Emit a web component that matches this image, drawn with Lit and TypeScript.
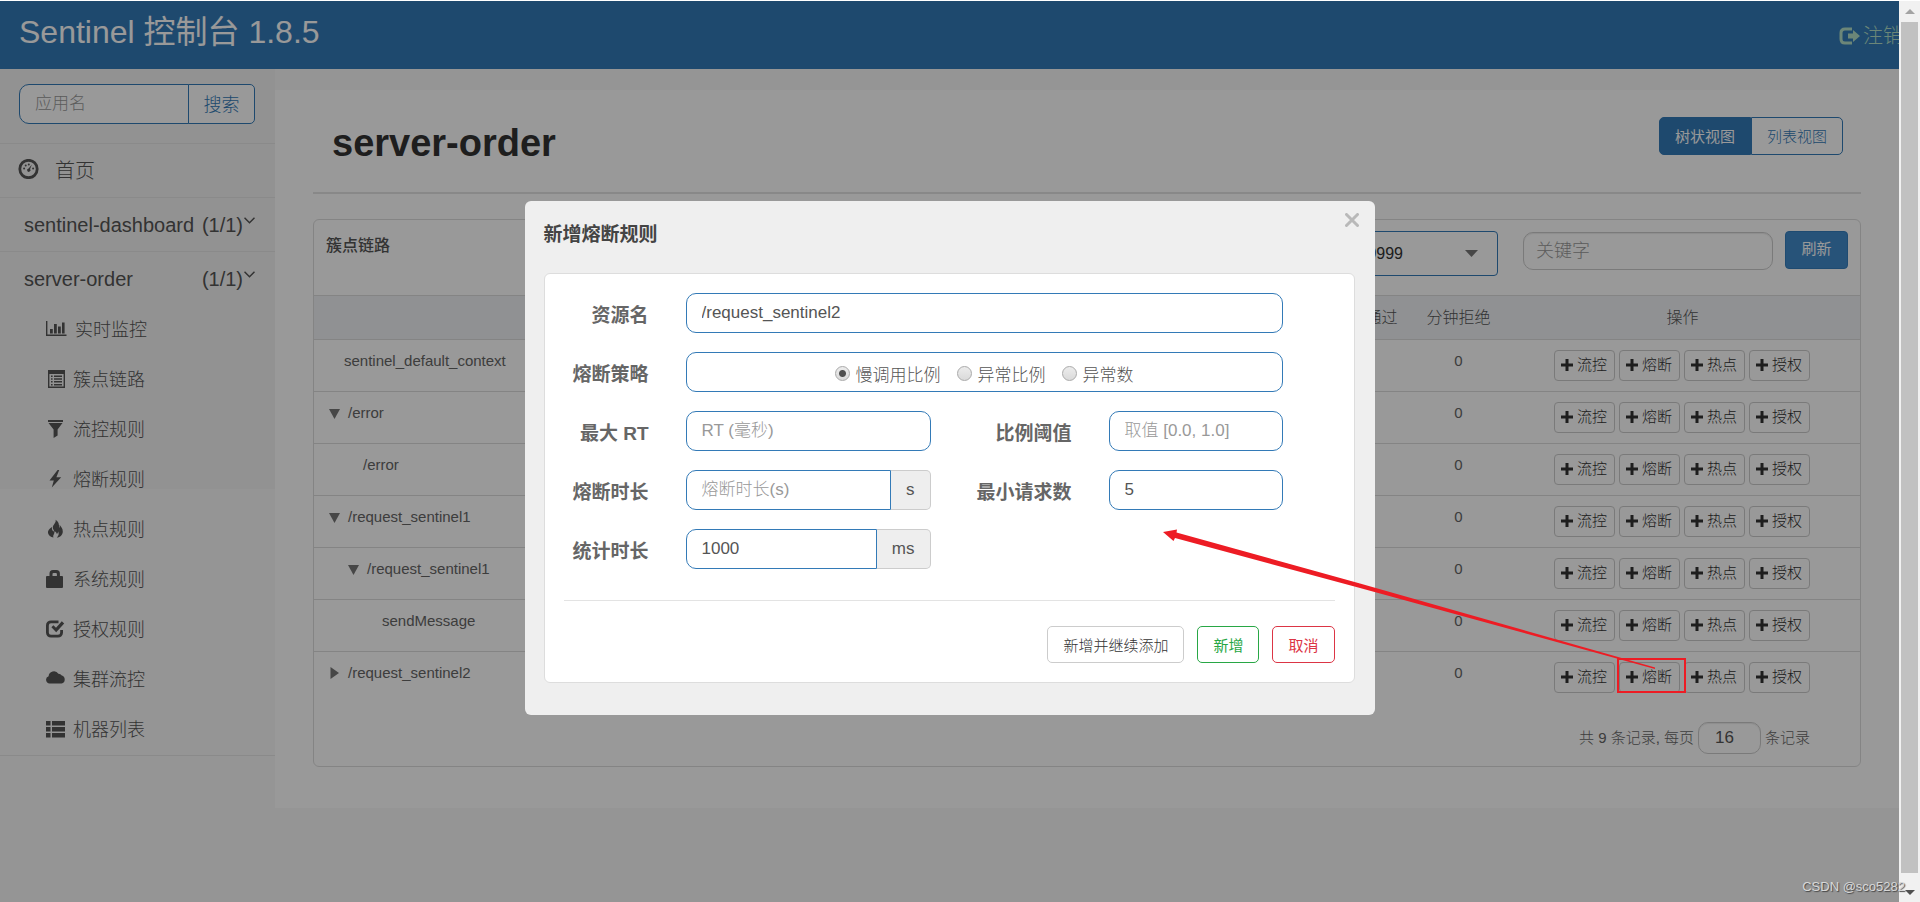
import { LitElement, html, css, svg } from "lit";
import { customElement } from "lit/decorators.js";
import { classMap } from "lit/directives/class-map.js";
import { styleMap } from "lit/directives/style-map.js";

interface MenuItem {
  icon: string;
  text: string;
}

interface TreeNode {
  name: string;
  level: number;
  toggle: "open" | "closed" | "leaf";
}

const MENU: MenuItem[] = [
  { icon: "chart", text: "实时监控" },
  { icon: "listAlt", text: "簇点链路" },
  { icon: "filter", text: "流控规则" },
  { icon: "flash", text: "熔断规则" },
  { icon: "fire", text: "热点规则" },
  { icon: "lock", text: "系统规则" },
  { icon: "check", text: "授权规则" },
  { icon: "cloud", text: "集群流控" },
  { icon: "thList", text: "机器列表" },
];

const NODES: TreeNode[] = [
  { name: "sentinel_default_context", level: 0, toggle: "leaf" },
  { name: "/error", level: 0, toggle: "open" },
  { name: "/error", level: 1, toggle: "leaf" },
  { name: "/request_sentinel1", level: 0, toggle: "open" },
  { name: "/request_sentinel1", level: 1, toggle: "open" },
  { name: "sendMessage", level: 2, toggle: "leaf" },
  { name: "/request_sentinel2", level: 0, toggle: "closed" },
];

const ACTIONS = ["流控", "熔断", "热点", "授权"];
const STRATEGIES = ["慢调用比例", "异常比例", "异常数"];

const ICONS: Record<string, unknown> = {
  dashboard: svg`<circle cx="10.500" cy="10" r="8.700" fill="none" stroke="currentColor" stroke-width="2.800"/>
    <circle cx="6.100" cy="9.600" r="1"/><circle cx="7.700" cy="6.400" r="1"/><circle cx="10.800" cy="5.400" r="1"/><circle cx="15.100" cy="9.600" r="1"/>
    <path d="M13.900 5.600 12.100 10a1.700 1.700 0 1 1-1.500-.6Z"/>`,
  chart: svg`<path d="M0 2h1.400v13.400H20.500V17H0ZM4 10h2.800v4.400H4ZM8 5h2.800v9.400H8ZM12 7.400h2.800v7H12ZM16 3.600h2.600v10.800H16Z"/>`,
  listAlt: svg`<path fill-rule="evenodd" d="M2 1h17v18H2ZM3.400 5v12.600h14.200V5Z"/>
    <path d="M5 6.500h1.600V8H5ZM8 6.500h8V8H8ZM5 9.300h1.600v1.500H5ZM8 9.300h8v1.500H8ZM5 12.100h1.600v1.500H5ZM8 12.100h8v1.500H8ZM5 14.900h1.600v1.500H5ZM8 14.900h8v1.500H8Z"/>`,
  filter: svg`<path d="M2 1h15v2H2ZM2.500 4h14L11.600 10.600V16.500L7.600 19V10.600Z"/>`,
  flash: svg`<path d="M11.600 1 3.500 11.400H7.800L5.800 18.500 15.200 8.300H10.400L13.200 1Z"/>`,
  fire: svg`<path d="M9.600.8c.8 3.200-2.800 4.800-2.800 8 0 1.400 1.200 2 1.200 3.600-1.600-.2-2.400-2.200-2-4.400C3.400 9.600 1.600 11.600 2 14c.4 2.200 2.600 4 5.600 4.600-1.200-2.400 1.200-3.400.8-6.400 1.600.6 2.400 1.600 2.400 2.800 1-.6 1.400-1.600 1.200-2.800 1.400 2.200.6 4.800-1.200 6.400 3.400-.4 6-2.800 6-6.200 0-3-1.800-4.400-3.200-6.600.2 1.400 0 2.600-.6 3.200C13.400 5.400 12.400 2.400 9.600.8Z"/>`,
  lock: svg`<path fill-rule="evenodd" d="M3.500 7V4.500A3.500 3.500 0 0 1 7 1h3.400a3.500 3.500 0 0 1 3.500 3.500V7H16a1 1 0 0 1 1 1v10a1 1 0 0 1-1 1H1a1 1 0 0 1-1-1V8A1 1 0 0 1 1 7ZM6.500 7h4.400V5a1 1 0 0 0-1-1H7.500a1 1 0 0 0-1 1Z"/>`,
  check: svg`<path d="M12.500 2.800H5A3.600 3.600 0 0 0 1.400 6.400v7.200A3.600 3.600 0 0 0 5 17.200h7a3.600 3.600 0 0 0 3.600-3.600V11" fill="none" stroke="currentColor" stroke-width="2.800"/>
    <path d="m5.400 8.200 2-2 2.600 2.600L15.800 2.200 18.200 4.400 10.200 13.200Z"/>`,
  cloud: svg`<path d="M3.600 14.500A3.700 3.700 0 0 1 2.600 7.300 5.300 5.300 0 0 1 12.400 4.800a4 4 0 0 1 3.400 1.800A4.100 4.100 0 0 1 15.600 14.500Z"/>`,
  thList: svg`<path d="M0 2h4.500v4.600H0ZM6 2h13v4.600H6ZM0 8h4.500v4.600H0ZM6 8h13v4.600H6ZM0 14h4.500v4.600H0ZM6 14h13v4.600H6Z"/>`,
};

const icon = (name: string) =>
  html`<svg class="icon" viewBox="0 0 21 20" width="21" height="20" fill="currentColor" aria-hidden="true">${ICONS[name]}</svg>`;

const shared = css`
  * {
    box-sizing: border-box;
  }
  button,
  input,
  select {
    font: inherit;
    color: inherit;
    margin: 0;
  }
  button {
    display: inline-flex;
    align-items: center;
    justify-content: center;
    padding: 0 0 2px;
    background: none;
    border: 1px solid;
    border-radius: 4px;
    cursor: pointer;
  }
  .icon {
    display: block;
    flex: none;
  }
`;

@customElement("side-menu")
export class SideMenu extends LitElement {
  static styles = [
    shared,
    css`
      :host {
        display: block;
        width: 275px;
        flex: none;
        color: #555;
      }
      .nav {
        background: linear-gradient(#f4f4f4 420px, #f8f8f8 420px);
        border-bottom: 1px solid #e7e7e7;
      }
      .search {
        display: flex;
        padding: 15px 20px 19px 19px;
        font-size: 17px;
      }
      .search input {
        flex: 1;
        min-width: 0;
        height: 40px;
        padding: 0 15px;
        background: #fff;
        border: 1px solid #337ab7;
        border-radius: 10px 0 0 10px;
      }
      .search input::placeholder {
        color: #999;
        opacity: 1;
      }
      .search button {
        width: 67px;
        height: 40px;
        margin-left: -1px;
        font-size: 18px;
        color: #337ab7;
        background: #fff;
        border-color: #337ab7;
        border-radius: 0 5px 5px 0;
      }
      .row {
        display: flex;
        align-items: center;
        height: 54px;
        border-top: 1px solid #e7e7e7;
        color: inherit;
        text-decoration: none;
        font-size: 20px;
        line-height: 30px;
      }
      .home {
        gap: 16px;
        padding: 0 18px;
      }
      .home .icon {
        margin-bottom: 4px;
      }
      .app {
        gap: 1px;
        padding: 0 20px 0 24px;
      }
      .name {
        flex: 1;
      }
      .app svg {
        margin-bottom: 8px;
      }
      .sub {
        display: flex;
        align-items: center;
        gap: 6px;
        height: 50px;
        padding-left: 46px;
        color: inherit;
        text-decoration: none;
        font-size: 18px;
        line-height: 26px;
      }
      .sub .icon {
        margin-bottom: 3px;
      }
      .wide {
        gap: 8px;
      }
    `,
  ];

  private app(name: string) {
    return html`<a class="row app" href="#">
      <span class="name">${name}</span><span>(1/1)</span>
      <svg width="11" height="7" viewBox="0 0 11 7" fill="none" stroke="currentColor" stroke-width="1.500" aria-hidden="true">
        <path d="M.5.700 5.500 5.700 10.500.700" />
      </svg>
    </a>`;
  }

  render() {
    return html`<nav class="nav">
      <div class="search">
        <input type="text" placeholder="应用名" aria-label="应用名" />
        <button type="button">搜索</button>
      </div>
      <a class="row home" href="#">${icon("dashboard")}<span>首页</span></a>
      ${this.app("sentinel-dashboard")} ${this.app("server-order")}
      ${MENU.map(
        (m) => html`<a class=${classMap({ sub: true, wide: m.icon === "chart" })} href="#">${icon(m.icon)}<span>${m.text}</span></a>`
      )}
    </nav>`;
  }
}

@customElement("link-table")
export class LinkTable extends LitElement {
  static styles = [
    shared,
    css`
      :host {
        display: block;
        border: 1px solid #ddd;
        border-radius: 6px;
        font-size: 15px;
        line-height: 22px;
        color: #666;
      }
      .head {
        display: flex;
        align-items: flex-start;
        padding: 11px 12px 19px;
      }
      .title {
        flex: 1;
        font-size: 16px;
        font-weight: 500;
        line-height: 30px;
        color: #555;
      }
      .machine {
        position: relative;
        display: flex;
        margin-right: 25px;
      }
      .machine select {
        appearance: none;
        width: 230px;
        height: 45px;
        padding: 0 94px 0 12px;
        font-size: 16px;
        color: #333;
        text-align-last: right;
        background: #fff;
        border: 1px solid #337ab7;
        border-radius: 4px;
      }
      .machine svg {
        position: absolute;
        right: 20px;
        top: 19px;
        pointer-events: none;
      }
      .key {
        width: 250px;
        height: 38px;
        margin: 1px 12px 0 0;
        padding: 0 12px;
        font-size: 18px;
        background: #fff;
        border: 1px solid #ccc;
        border-radius: 10px;
        box-shadow: inset 0 1px 1px rgba(0, 0, 0, 0.08);
      }
      .key::placeholder {
        color: #999;
        opacity: 1;
      }
      .refresh {
        width: 63px;
        height: 38px;
        font-weight: 400;
        color: #fff;
        background: #428bca;
        border-color: #357ebd;
      }
      table {
        width: 100%;
        table-layout: fixed;
        border-spacing: 0;
      }
      .num {
        width: 93px;
      }
      .ops {
        width: 355px;
      }
      th {
        height: 45px;
        padding: 0;
        font-size: 16px;
        font-weight: inherit;
        color: #555;
        background: #f0f2f5;
        border-top: 1px solid #ddd;
        border-bottom: 1px solid #ddd;
      }
      td {
        height: 52px;
        padding: 10px 0 0;
        vertical-align: top;
        text-align: center;
        border-bottom: 1px solid #ddd;
      }
      tr:last-child td {
        height: 51px;
        border-bottom: 0;
      }
      .node {
        display: flex;
        align-items: center;
        gap: 8px;
      }
      .node svg {
        color: #777;
      }
      .actions {
        display: flex;
        justify-content: center;
        gap: 4px;
        padding-right: 2px;
      }
      .actions button {
        width: 61px;
        height: 31px;
        gap: 4px;
        color: #333;
        border-color: #ccc;
      }
      .pager {
        display: flex;
        justify-content: flex-end;
        align-items: center;
        gap: 4px;
        padding: 19px 50px 12px;
      }
      .pager input {
        width: 63px;
        height: 32px;
        padding: 0 16px;
        font-size: 17px;
        color: #555;
        background: #fff;
        border: 1px solid #ccc;
        border-radius: 10px;
        box-shadow: inset 0 1px 1px rgba(0, 0, 0, 0.08);
      }
    `,
  ];

  private node(n: TreeNode) {
    const leaf = n.toggle === "leaf";
    return html`<div class="node" style=${styleMap({ paddingLeft: `${(leaf ? 30 : 15) + n.level * 19}px` })}>
      ${leaf
        ? ""
        : html`<svg width="11" height="12" viewBox="0 0 11 12" fill="currentColor" aria-hidden="true">
            <path d=${n.toggle === "open" ? "M0 2h11L5.500 12Z" : "M1.500 0v12L10 6Z"} />
          </svg>`}
      <span>${n.name}</span>
    </div>`;
  }

  render() {
    return html`
      <div class="head">
        <span class="title">簇点链路</span>
        <span class="machine">
          <select aria-label="机器"><option>9999</option></select>
          <svg width="13" height="7" viewBox="0 0 13 7" aria-hidden="true"><path d="M0 0h13L6.500 7Z" fill="#777" /></svg>
        </span>
        <input class="key" type="text" placeholder="关键字" aria-label="关键字" />
        <button class="refresh" type="button">刷新</button>
      </div>
      <table>
        <thead>
          <tr>
            <th></th>
            <th class="num">分钟通过</th>
            <th class="num">分钟拒绝</th>
            <th class="ops">操作</th>
          </tr>
        </thead>
        <tbody>
          ${NODES.map(
            (n) => html`<tr>
              <td>${this.node(n)}</td>
              <td></td>
              <td>0</td>
              <td>
                <div class="actions">
                  ${ACTIONS.map(
                    (a) => html`<button type="button">
                      <svg width="12" height="12" viewBox="0 0 12 12" aria-hidden="true"><path d="M6 0v12M0 6h12" stroke="#333" stroke-width="3" /></svg>${a}
                    </button>`
                  )}
                </div>
              </td>
            </tr>`
          )}
        </tbody>
      </table>
      <div class="pager">
        <label for="size">共 9 条记录, 每页</label>
        <input id="size" type="text" value="16" />
        <span>条记录</span>
      </div>
    `;
  }
}

@customElement("rule-dialog")
export class RuleDialog extends LitElement {
  static styles = [
    shared,
    css`
      :host {
        display: block;
        width: 850px;
        max-width: 100%;
        padding: 0 20px 32px 19px;
        background: #efefef;
        border-radius: 6px;
        font-size: 17px;
        color: #555;
      }
      .bar {
        position: relative;
        height: 72px;
        padding-top: 20px;
      }
      .title {
        font-size: 19px;
        font-weight: 700;
        line-height: 28px;
        color: #444;
      }
      .close {
        position: absolute;
        top: 12px;
        right: -5px;
        width: 16px;
        height: 16px;
        border: 0;
      }
      .panel {
        padding: 19px;
        background: #fff;
        border: 1px solid #ddd;
        border-radius: 6px;
      }
      .grid {
        display: grid;
        grid-template-columns: 85px minmax(0, 245fr) 104px minmax(0, 174fr);
        gap: 19px 37px;
        margin-right: 52px;
      }
      .label {
        padding-top: 6px;
        font-size: 19px;
        font-weight: 700;
        line-height: 34px;
        text-align: right;
        white-space: nowrap;
        color: #666;
      }
      .first {
        grid-column: 1;
      }
      .box {
        width: 100%;
        min-width: 0;
        height: 40px;
        padding: 0 15px;
        background: #fff;
        border: 1px solid #337ab7;
        border-radius: 10px;
      }
      .box::placeholder {
        color: #999;
        opacity: 1;
      }
      .full {
        grid-column: 2 / -1;
      }
      .radios {
        display: flex;
        align-items: center;
        justify-content: center;
        gap: 16px;
        padding: 7px 0 0;
      }
      .radio {
        display: flex;
        align-items: center;
        gap: 6px;
        line-height: 26px;
      }
      .radio input {
        appearance: none;
        width: 15px;
        height: 15px;
        margin-bottom: 4px;
        border: 1px solid #aaa;
        border-radius: 50%;
        background: linear-gradient(#ececec, #dadada);
      }
      .radio input:checked {
        background: radial-gradient(circle, #505050 3px, transparent 4px), linear-gradient(#ececec, #dadada);
      }
      .group {
        display: flex;
      }
      .group .box {
        flex: 1;
        border-radius: 10px 0 0 10px;
      }
      .unit {
        padding: 0 15px;
        line-height: 37px;
        background: #eee;
        border: 1px solid #ccc;
        border-left: 0;
        border-radius: 0 5px 5px 0;
      }
      .line {
        margin: 31px 0 25px;
        border: 0;
        border-top: 1px solid #e3e3e3;
      }
      .foot {
        display: flex;
        justify-content: flex-end;
        gap: 13px;
        font-size: 15px;
      }
      .foot button {
        height: 37px;
        padding: 0 15px 1px;
        border-radius: 5px;
      }
      .plain {
        color: #333;
        border-color: #ccc;
      }
      .ok {
        font-weight: 400;
        color: #28a745;
      }
      .cancel {
        font-weight: 400;
        color: #dc3545;
      }
    `,
  ];

  render() {
    return html`
      <div class="bar">
        <div class="title">新增熔断规则</div>
        <button class="close" type="button" aria-label="关闭">
          <svg width="14" height="14" viewBox="0 0 14 14" aria-hidden="true">
            <path d="M1.500 1.500 12.500 12.500M12.500 1.500 1.500 12.500" stroke="#b9b9b9" stroke-width="3" stroke-linecap="round" />
          </svg>
        </button>
      </div>
      <form class="panel" @submit=${(e: Event) => e.preventDefault()}>
        <div class="grid">
          <label class="label first" for="resource">资源名</label>
          <input class="box full" id="resource" type="text" value="/request_sentinel2" />
          <span class="label first" id="strategy">熔断策略</span>
          <div class="box full radios" role="radiogroup" aria-labelledby="strategy">
            ${STRATEGIES.map(
              (s, i) => html`<label class="radio"><input type="radio" name="strategy" ?checked=${i === 0} />${s}</label>`
            )}
          </div>
          <label class="label first" for="rt">最大 RT</label>
          <input class="box" id="rt" type="text" placeholder="RT (毫秒)" />
          <label class="label" for="ratio">比例阈值</label>
          <input class="box" id="ratio" type="text" placeholder="取值 [0.0, 1.0]" />
          <label class="label first" for="window">熔断时长</label>
          <div class="group">
            <input class="box" id="window" type="text" placeholder="熔断时长(s)" /><span class="unit">s</span>
          </div>
          <label class="label" for="min">最小请求数</label>
          <input class="box" id="min" type="text" value="5" />
          <label class="label first" for="stat">统计时长</label>
          <div class="group">
            <input class="box" id="stat" type="text" value="1000" /><span class="unit">ms</span>
          </div>
        </div>
        <hr class="line" />
        <div class="foot">
          <button class="plain" type="button">新增并继续添加</button>
          <button class="ok" type="submit">新增</button>
          <button class="cancel" type="button">取消</button>
        </div>
      </form>
    `;
  }
}

@customElement("app-root")
export class AppRoot extends LitElement {
  static styles = [
    shared,
    css`
      :host {
        position: relative;
        display: flex;
        min-height: 100vh;
        padding-top: 1px;
        box-sizing: border-box;
        overflow: hidden;
        background: #fff;
        font-family: "Liberation Sans", "Noto Sans CJK SC", sans-serif;
        font-weight: 300;
      }
      .page {
        position: relative;
        flex: 1;
        min-width: 0;
        overflow: hidden;
        background: #f8f8f8;
      }
      .top {
        display: flex;
        justify-content: space-between;
        height: 68px;
        padding-left: 19px;
        color: #fff;
        background: #337ab7;
      }
      .brand {
        font-size: 32px;
        font-weight: 400;
        line-height: 62px;
      }
      .logout {
        display: flex;
        align-items: center;
        gap: 3px;
        margin-right: -4px;
        padding-top: 2px;
        color: #b4e0c8;
        font-size: 20px;
        line-height: 68px;
        text-decoration: none;
      }
      .columns {
        display: flex;
        align-items: flex-start;
      }
      .main {
        flex: 1;
        min-width: 0;
        margin-top: 21px;
        padding: 27px 38px 41px;
        background: #fff;
      }
      .heading {
        display: flex;
        justify-content: space-between;
        align-items: flex-start;
        margin-bottom: 25px;
        padding: 0 18px 23px 19px;
        border-bottom: 2px solid #e3e3e3;
      }
      h1 {
        margin: 0;
        font-size: 38px;
        font-weight: 700;
        line-height: 52px;
        color: #333;
      }
      .views {
        display: flex;
        font-size: 15px;
      }
      .views button {
        width: 92px;
        height: 38px;
        color: #337ab7;
        border-color: #337ab7;
        border-radius: 0 5px 5px 0;
      }
      .views .active {
        color: #fff;
        font-weight: 400;
        background: #337ab7;
        border-radius: 5px 0 0 5px;
      }
      .backdrop {
        position: absolute;
        inset: 0;
        display: flex;
        justify-content: center;
        align-items: flex-start;
        padding-top: 200px;
        background: rgba(0, 0, 0, 0.4);
      }
      .scroll {
        display: flex;
        flex-direction: column;
        align-items: center;
        flex: none;
        width: 21px;
        padding: 0 2px;
        background: #f1f1f1;
      }
      .arrow {
        display: flex;
        align-items: center;
        justify-content: center;
        height: 21px;
      }
      .down {
        height: 29px;
        padding-top: 9px;
      }
      .thumb {
        flex: 1;
        width: 100%;
        background: #c1c1c1;
      }
      .marks {
        position: absolute;
        top: 0;
        right: 0;
        pointer-events: none;
      }
      .watermark {
        position: absolute;
        right: 15px;
        bottom: 6px;
        font-size: 13px;
        line-height: 18px;
        color: #d8d8d8;
        text-shadow: 1px 1px 1px #444;
      }
    `,
  ];

  render() {
    return html`
      <div class="page">
        <header class="top">
          <span class="brand">Sentinel 控制台 1.8.5</span>
          <a class="logout" href="#">
            <svg width="21" height="18" viewBox="0 0 21 18" aria-hidden="true">
              <path d="M13 2H6Q2 2 2 6V12Q2 16 6 16H13" fill="none" stroke="currentColor" stroke-width="3" />
              <path d="M9 6.500H14V3L21 9 14 15V11.500H9Z" fill="currentColor" />
            </svg>
            <span>注销</span>
          </a>
        </header>
        <div class="columns">
          <side-menu></side-menu>
          <main class="main">
            <div class="heading">
              <h1>server-order</h1>
              <div class="views">
                <button class="active" type="button">树状视图</button>
                <button type="button">列表视图</button>
              </div>
            </div>
            <link-table></link-table>
          </main>
        </div>
        <div class="backdrop"><rule-dialog role="dialog" aria-label="新增熔断规则"></rule-dialog></div>
      </div>
      <div class="scroll" aria-hidden="true">
        <span class="arrow"><svg width="10" height="5" viewBox="0 0 10 5"><path d="M5 0 10 5H0Z" fill="#a3a3a3" /></svg></span>
        <span class="thumb"></span>
        <span class="arrow down"><svg width="10" height="5" viewBox="0 0 10 5"><path d="M0 0H10L5 5Z" fill="#505050" /></svg></span>
      </div>
      <svg class="marks" width="820" height="720" viewBox="1100 0 820 720" aria-hidden="true">
        <rect x="1618" y="659" width="67" height="33" fill="none" stroke="#ed1c24" stroke-width="2" />
        <path d="M1163 532 1177 529.500 1176.500 532.500 1360 583.500 1655 667.500V669L1360 588 1175 538 1173.500 541Z" fill="#ed1c24" />
      </svg>
      <span class="watermark">CSDN @sco5282</span>
    `;
  }
}
